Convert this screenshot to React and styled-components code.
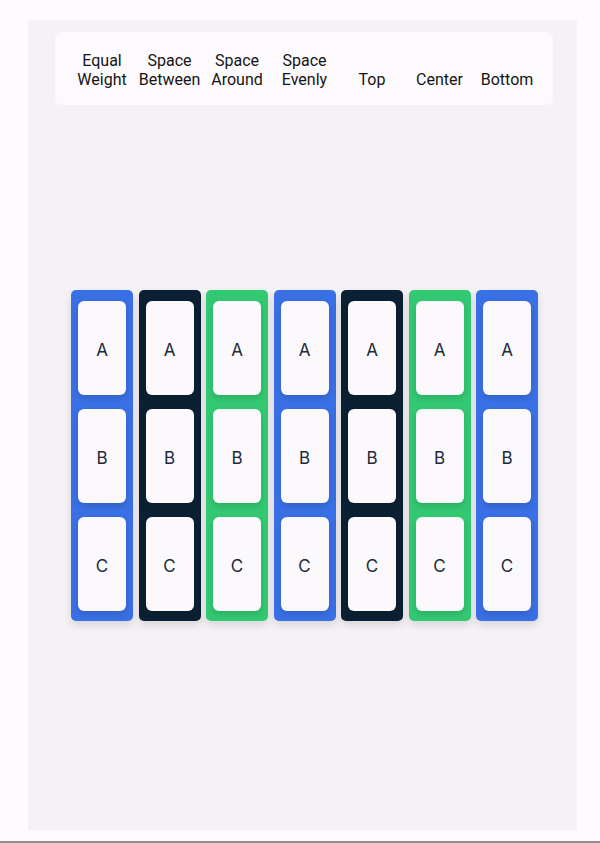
import React from "react";
import styled, { createGlobalStyle } from "styled-components";

const GlobalStyle = createGlobalStyle`
  html, body {
    margin: 0;
    padding: 0;
    background: #fdfbfd;
  }
`;

const labels = [
  ["Equal", "Weight"],
  ["Space", "Between"],
  ["Space", "Around"],
  ["Space", "Evenly"],
  ["Top"],
  ["Center"],
  ["Bottom"],
];

const colors = ["#3a70e5", "#0b2133", "#33c872", "#3a70e5", "#0b2133", "#33c872", "#3a70e5"];

export default function App() {
  return (
    <>
      <GlobalStyle />
      <Page>
        <Panel>
          <Header>
            <LabelRow>
              {labels.map((l, i) => (
                <Label key={i}>
                  {l.map((w) => (
                    <span key={w}>{w}</span>
                  ))}
                </Label>
              ))}
            </LabelRow>
          </Header>
          <Columns>
            {colors.map((c, i) => (
              <Column key={i} $color={c}>
                {["A", "B", "C"].map((x) => (
                  <Card key={x}>{x}</Card>
                ))}
              </Column>
            ))}
          </Columns>
        </Panel>
        <BottomLine />
      </Page>
    </>
  );
}

const Page = styled.div`
  height: 843px;
  display: flex;
  flex-direction: column;
  padding-top: 20px;
  box-sizing: border-box;
`;

const Panel = styled.div`
  margin-left: 28px;
  width: 549px;
  height: 810px;
  background: #f4f2f4;
  display: flex;
  flex-direction: column;
  align-items: flex-start;
`;

const Header = styled.div`
  margin: 12px 0 0 27px;
  width: 498px;
  height: 73px;
  box-sizing: border-box;
  padding: 2px 0 0 16px;
  background: #fcfafc;
  border-radius: 7px;
  display: flex;
  align-items: center;
`;

const LabelRow = styled.div`
  display: grid;
  grid-template-columns: repeat(7, 62px);
  column-gap: 5.5px;
  align-items: end;
`;

const Label = styled.div`
  display: flex;
  flex-direction: column;
  align-items: center;
  font-family: Roboto, "Liberation Sans", sans-serif;
  font-size: 16px;
  line-height: 19px;
  color: #151515;
  white-space: nowrap;
`;

const Columns = styled.div`
  margin: 185px 0 0 43px;
  display: flex;
  gap: 5.5px;
`;

const Column = styled.div`
  width: 62px;
  height: 331px;
  box-sizing: border-box;
  padding: 11px 7px 10px;
  background: ${(p) => p.$color};
  border-radius: 5px;
  box-shadow: 0 4px 8px rgba(0, 0, 0, 0.12);
  display: flex;
  flex-direction: column;
  gap: 14px;
`;

const Card = styled.div`
  flex: 1;
  padding-top: 3px;
  background: #fbf9fb;
  border-radius: 6px;
  box-shadow: 0 3px 6px rgba(0, 0, 0, 0.14);
  display: flex;
  align-items: center;
  justify-content: center;
  font-family: Inter, "Noto Sans", sans-serif;
  font-size: 17px;
  color: #1c2a39;
`;

const BottomLine = styled.div`
  margin-top: auto;
  height: 2px;
  background: #8e8e8e;
`;
